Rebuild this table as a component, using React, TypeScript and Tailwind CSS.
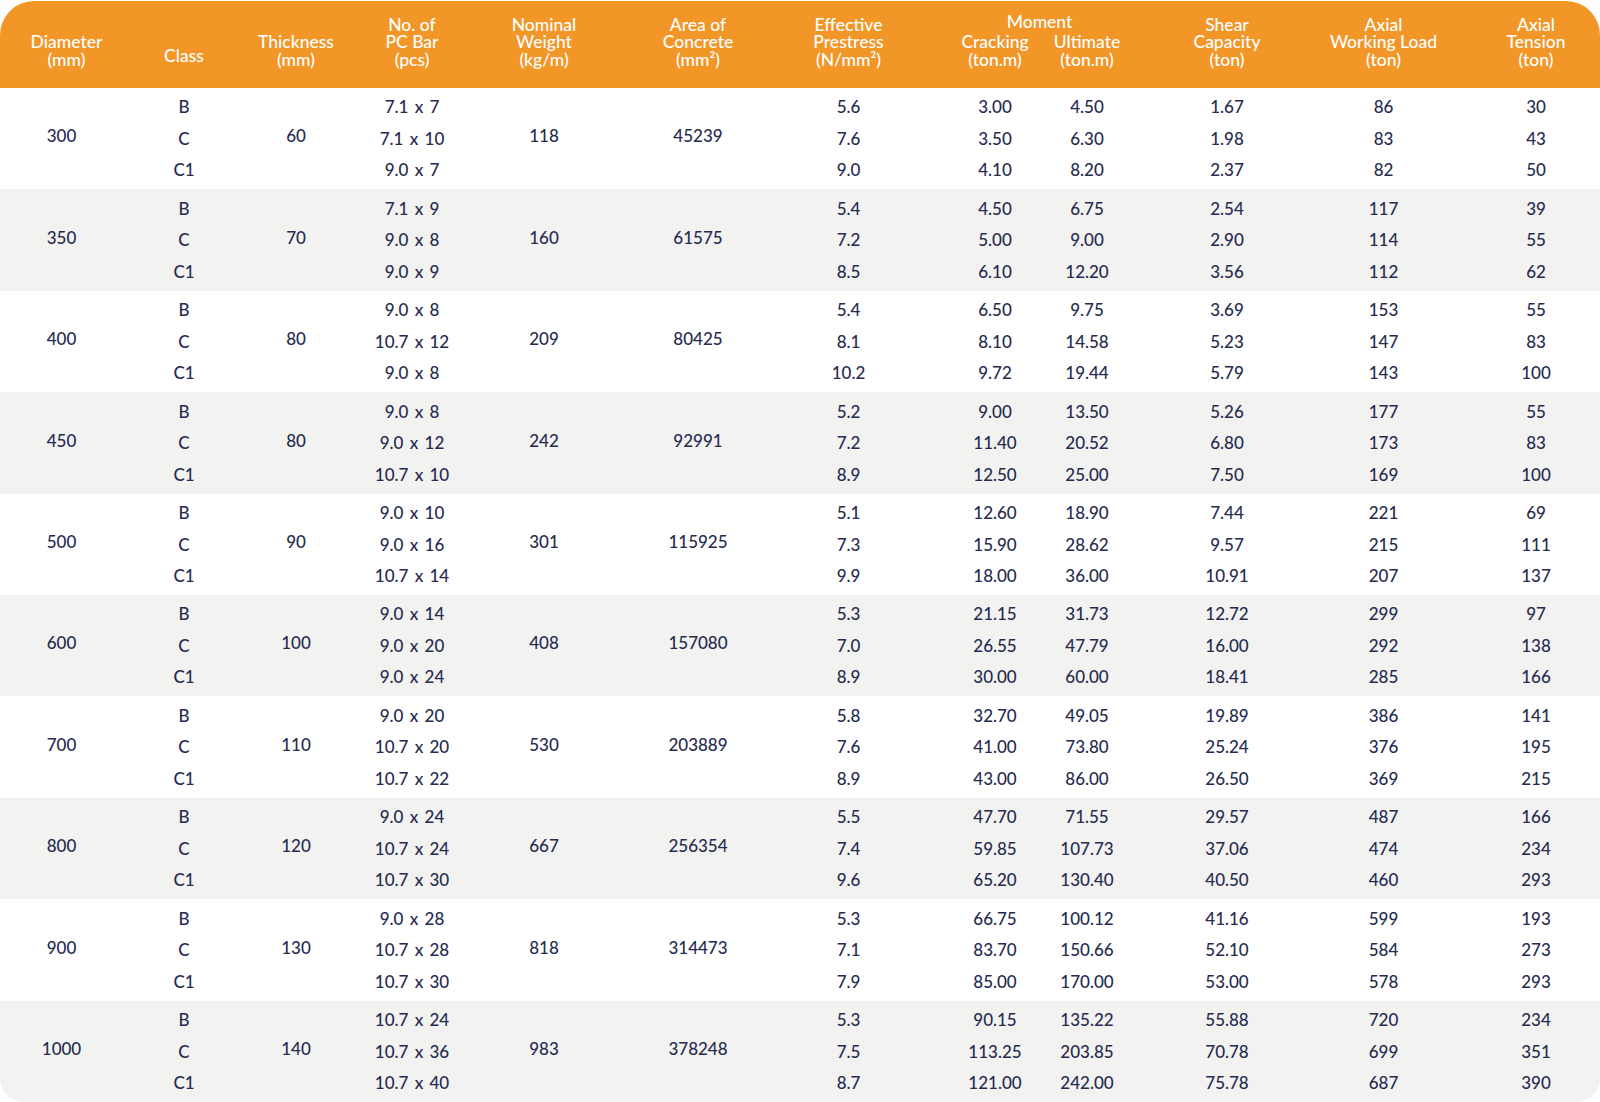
import React from 'react';

const GRID =
  'grid grid-cols-[123px_117px_114px_124px_143px_152px_149px_119px_116px_148px_155px_140px]';

// per-column nudges so each column's text centre lands where the reference has it
const COL = [
  '',
  'pl-[5px]',
  'pr-[2px]',
  'pr-[8px]',
  'pr-[11px]',
  'pl-[2px]',
  'pl-[2px]',
  'pl-[27px]',
  'pr-[24px]',
  'pr-[8px]',
  'pl-[2px]',
  'pl-[12px]',
];

interface Group {
  dia: string;
  thk: string;
  wt: string;
  area: string;
  bar: string[];
  eff: string[];
  crack: string[];
  ult: string[];
  shear: string[];
  load: string[];
  tension: string[];
}

const groups: Group[] = [
  { dia: '300', thk: '60', wt: '118', area: '45239', bar: ['7.1 x 7', '7.1 x 10', '9.0 x 7'], eff: ['5.6', '7.6', '9.0'], crack: ['3.00', '3.50', '4.10'], ult: ['4.50', '6.30', '8.20'], shear: ['1.67', '1.98', '2.37'], load: ['86', '83', '82'], tension: ['30', '43', '50'] },
  { dia: '350', thk: '70', wt: '160', area: '61575', bar: ['7.1 x 9', '9.0 x 8', '9.0 x 9'], eff: ['5.4', '7.2', '8.5'], crack: ['4.50', '5.00', '6.10'], ult: ['6.75', '9.00', '12.20'], shear: ['2.54', '2.90', '3.56'], load: ['117', '114', '112'], tension: ['39', '55', '62'] },
  { dia: '400', thk: '80', wt: '209', area: '80425', bar: ['9.0 x 8', '10.7 x 12', '9.0 x 8'], eff: ['5.4', '8.1', '10.2'], crack: ['6.50', '8.10', '9.72'], ult: ['9.75', '14.58', '19.44'], shear: ['3.69', '5.23', '5.79'], load: ['153', '147', '143'], tension: ['55', '83', '100'] },
  { dia: '450', thk: '80', wt: '242', area: '92991', bar: ['9.0 x 8', '9.0 x 12', '10.7 x 10'], eff: ['5.2', '7.2', '8.9'], crack: ['9.00', '11.40', '12.50'], ult: ['13.50', '20.52', '25.00'], shear: ['5.26', '6.80', '7.50'], load: ['177', '173', '169'], tension: ['55', '83', '100'] },
  { dia: '500', thk: '90', wt: '301', area: '115925', bar: ['9.0 x 10', '9.0 x 16', '10.7 x 14'], eff: ['5.1', '7.3', '9.9'], crack: ['12.60', '15.90', '18.00'], ult: ['18.90', '28.62', '36.00'], shear: ['7.44', '9.57', '10.91'], load: ['221', '215', '207'], tension: ['69', '111', '137'] },
  { dia: '600', thk: '100', wt: '408', area: '157080', bar: ['9.0 x 14', '9.0 x 20', '9.0 x 24'], eff: ['5.3', '7.0', '8.9'], crack: ['21.15', '26.55', '30.00'], ult: ['31.73', '47.79', '60.00'], shear: ['12.72', '16.00', '18.41'], load: ['299', '292', '285'], tension: ['97', '138', '166'] },
  { dia: '700', thk: '110', wt: '530', area: '203889', bar: ['9.0 x 20', '10.7 x 20', '10.7 x 22'], eff: ['5.8', '7.6', '8.9'], crack: ['32.70', '41.00', '43.00'], ult: ['49.05', '73.80', '86.00'], shear: ['19.89', '25.24', '26.50'], load: ['386', '376', '369'], tension: ['141', '195', '215'] },
  { dia: '800', thk: '120', wt: '667', area: '256354', bar: ['9.0 x 24', '10.7 x 24', '10.7 x 30'], eff: ['5.5', '7.4', '9.6'], crack: ['47.70', '59.85', '65.20'], ult: ['71.55', '107.73', '130.40'], shear: ['29.57', '37.06', '40.50'], load: ['487', '474', '460'], tension: ['166', '234', '293'] },
  { dia: '900', thk: '130', wt: '818', area: '314473', bar: ['9.0 x 28', '10.7 x 28', '10.7 x 30'], eff: ['5.3', '7.1', '7.9'], crack: ['66.75', '83.70', '85.00'], ult: ['100.12', '150.66', '170.00'], shear: ['41.16', '52.10', '53.00'], load: ['599', '584', '578'], tension: ['193', '273', '293'] },
  { dia: '1000', thk: '140', wt: '983', area: '378248', bar: ['10.7 x 24', '10.7 x 36', '10.7 x 40'], eff: ['5.3', '7.5', '8.7'], crack: ['90.15', '113.25', '121.00'], ult: ['135.22', '203.85', '242.00'], shear: ['55.88', '70.78', '75.78'], load: ['720', '699', '687'], tension: ['234', '351', '390'] },
];

const CLASSES = ['B', 'C', 'C1'];

function HeadCell({ lines, col, extra = '' }: { lines: string[]; col: number; extra?: string }) {
  return (
    <div className={`flex flex-col items-center justify-end text-center ${COL[col]} ${extra}`}>
      {lines.map((l) => (
        <span key={l} className="leading-[17.5px] whitespace-nowrap">
          {l}
        </span>
      ))}
    </div>
  );
}

function Single({ value, col }: { value: string; col: number }) {
  return (
    <div className={`flex items-center justify-center pb-[5px] ${COL[col]}`}>
      <span>{value}</span>
    </div>
  );
}

function Stack({ values, col }: { values: string[]; col: number }) {
  return (
    <div className={`flex flex-col items-center justify-center ${COL[col]}`}>
      {values.map((v, i) => (
        <span key={i} className="leading-[31.5px] whitespace-nowrap [word-spacing:2px]">
          {v}
        </span>
      ))}
    </div>
  );
}

export default function App() {
  return (
    <div className="w-[1600px] h-[1102px] bg-white pt-px flex flex-col font-[Lato,sans-serif] font-medium text-[17px] text-[#262b50]">
      {/* Header */}
      <div className={`${GRID} h-[87px] shrink-0 bg-[#f29628] text-white text-[17.5px] rounded-t-[34px] pb-[20px]`}>
        <HeadCell lines={['Diameter', '(mm)']} col={0} extra="pl-[10px]" />
        <HeadCell lines={['Class']} col={1} extra="pb-[4px]" />
        <HeadCell lines={['Thickness', '(mm)']} col={2} />
        <HeadCell lines={['No. of', 'PC Bar', '(pcs)']} col={3} />
        <HeadCell lines={['Nominal', 'Weight', '(kg/m)']} col={4} />
        <HeadCell lines={['Area of', 'Concrete', '(mm²)']} col={5} />
        <HeadCell lines={['Effective', 'Prestress', '(N/mm²)']} col={6} />
        <div className="col-span-2 flex flex-col justify-end">
          <div className="text-center leading-[17.5px] mb-[3px]">Moment</div>
          <div className="grid grid-cols-[119px_116px]">
            <HeadCell lines={['Cracking', '(ton.m)']} col={7} />
            <HeadCell lines={['Ultimate', '(ton.m)']} col={8} />
          </div>
        </div>
        <HeadCell lines={['Shear', 'Capacity', '(ton)']} col={9} />
        <HeadCell lines={['Axial', 'Working Load', '(ton)']} col={10} />
        <HeadCell lines={['Axial', 'Tension', '(ton)']} col={11} />
      </div>

      {/* Body */}
      <div className="flex-1 flex flex-col">
        {groups.map((g, i) => (
          <div
            key={g.dia}
            className={`${GRID} flex-1 ${i % 2 === 1 ? 'bg-[#f2f2f0]' : 'bg-white'} ${
              i === groups.length - 1 ? 'rounded-b-[24px]' : ''
            }`}
          >
            <Single value={g.dia} col={0} />
            <Stack values={CLASSES} col={1} />
            <Single value={g.thk} col={2} />
            <Stack values={g.bar} col={3} />
            <Single value={g.wt} col={4} />
            <Single value={g.area} col={5} />
            <Stack values={g.eff} col={6} />
            <Stack values={g.crack} col={7} />
            <Stack values={g.ult} col={8} />
            <Stack values={g.shear} col={9} />
            <Stack values={g.load} col={10} />
            <Stack values={g.tension} col={11} />
          </div>
        ))}
      </div>
    </div>
  );
}
